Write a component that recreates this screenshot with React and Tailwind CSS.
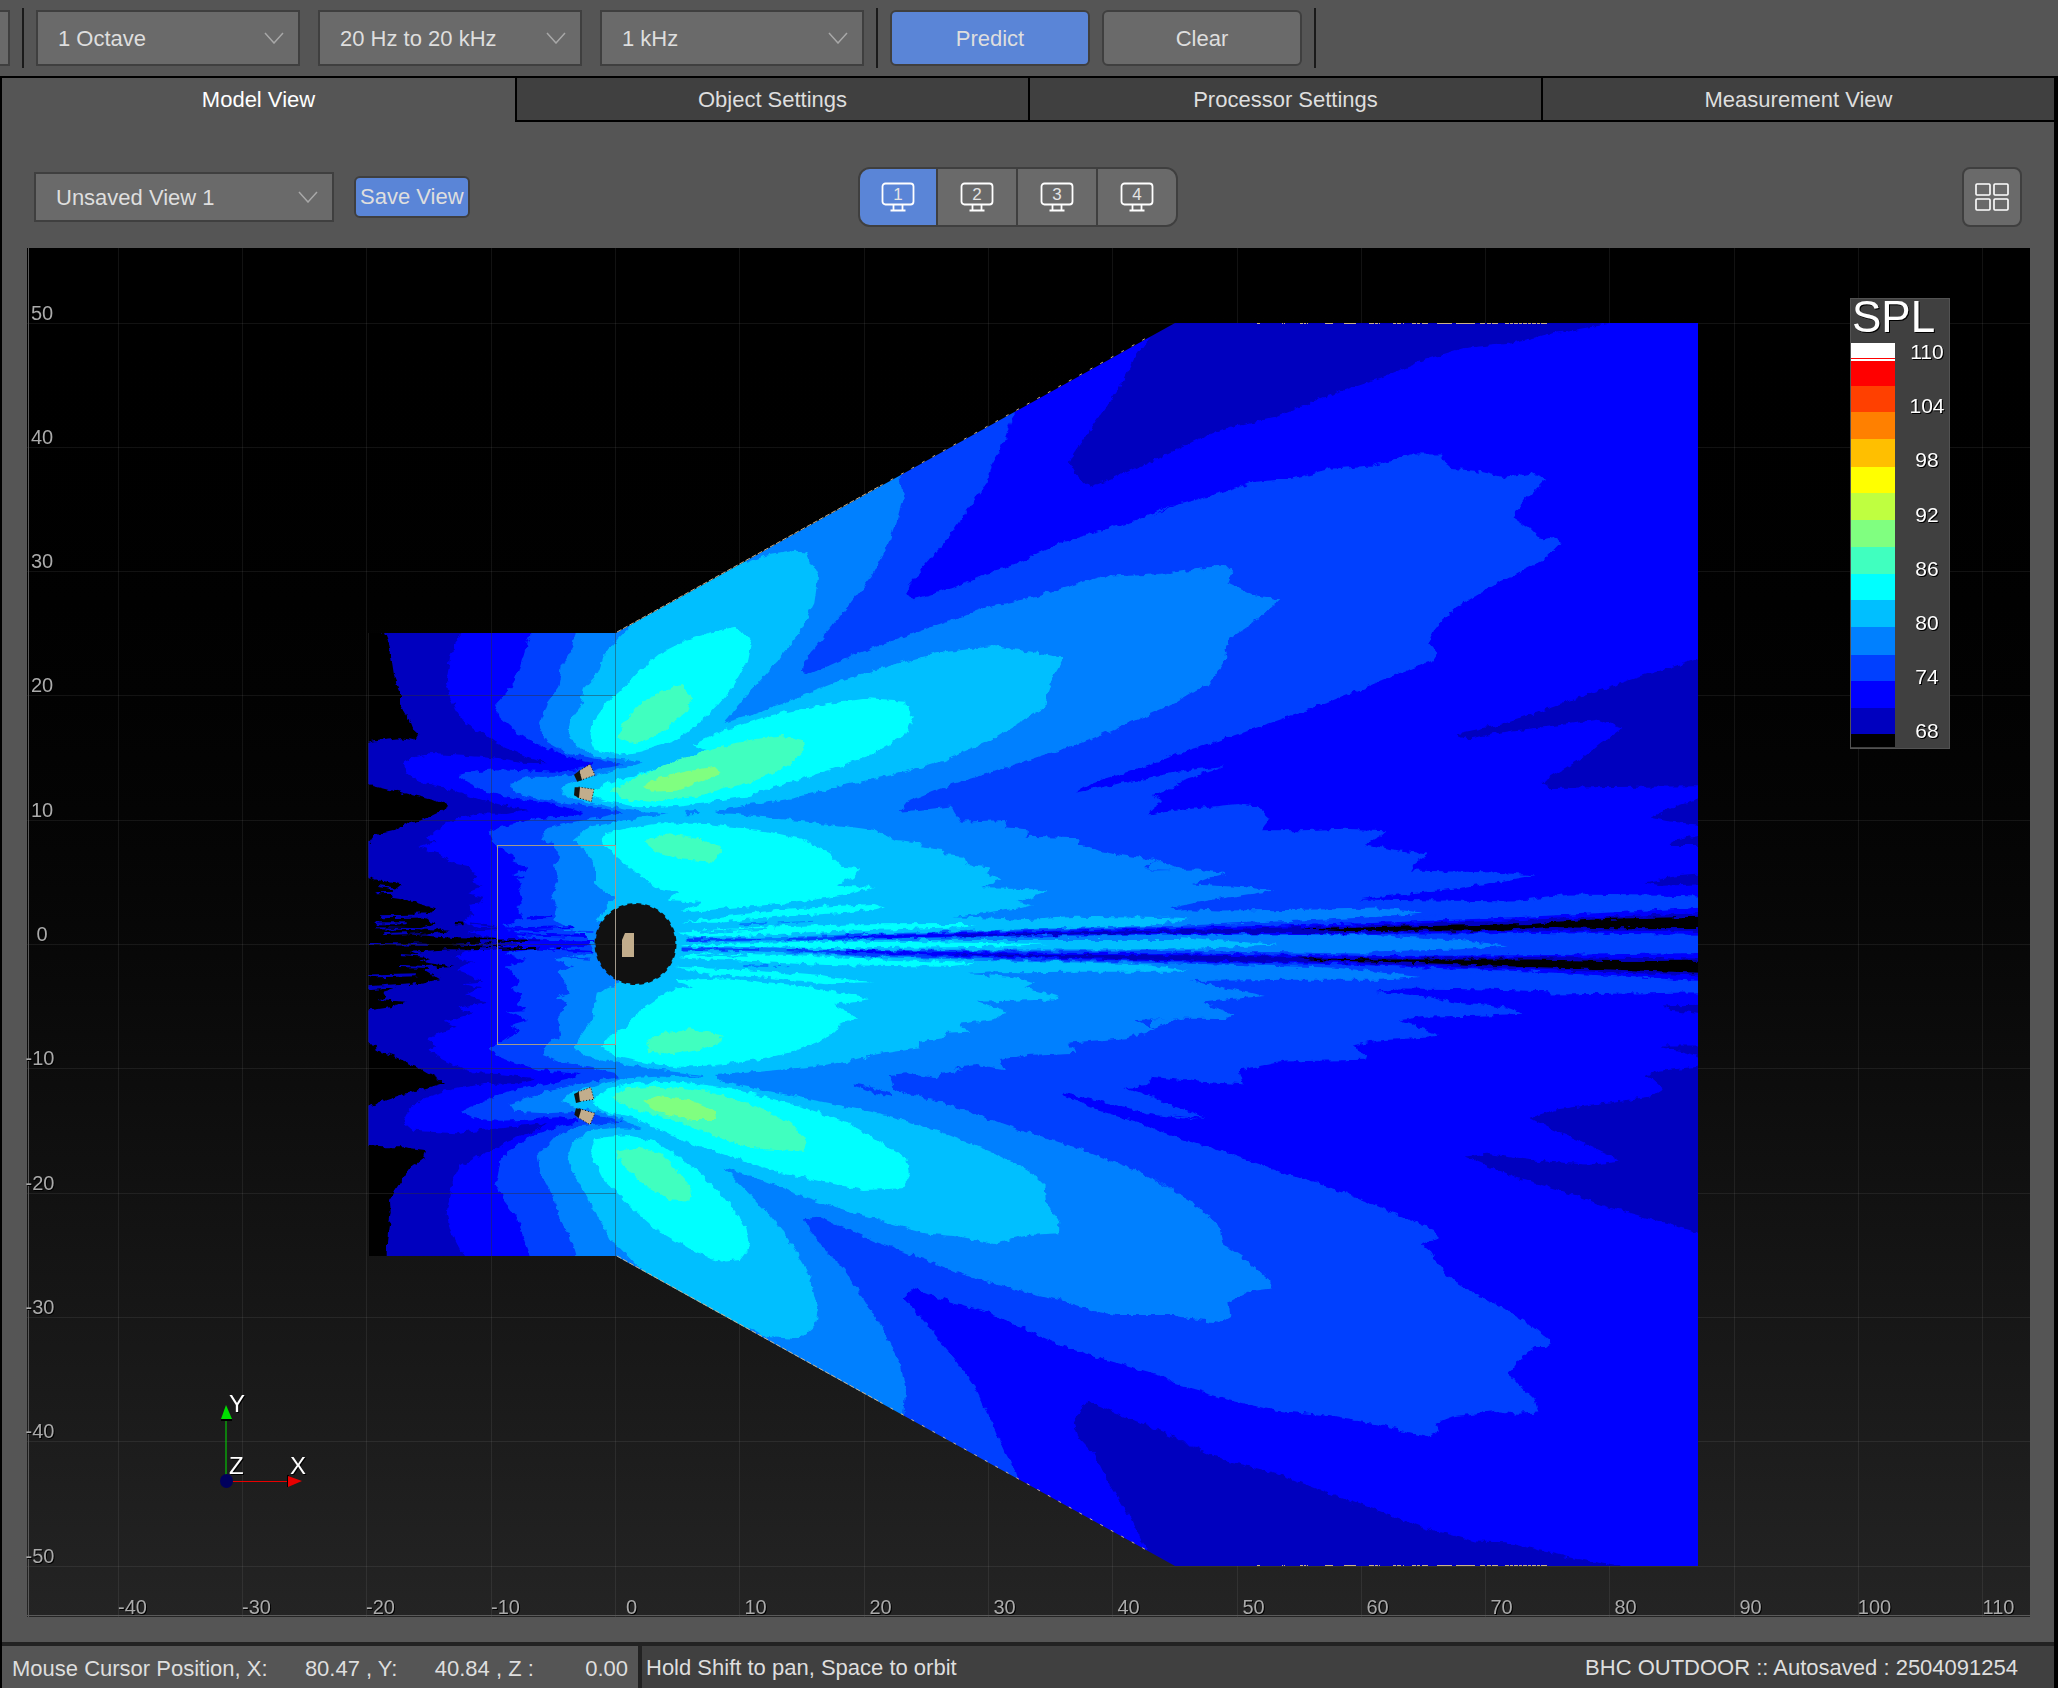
import React from "react";

/* ------------------------------------------------------------------ */
/* Field data: contours are stored per survey patch and mapped to the  */
/* model canvas. A letter switches patch, "x,y" pairs are patch units. */
/* ------------------------------------------------------------------ */
const PATCHES = {
  A: [340, 600, 3, 3],
  B: [340, 920, 3, 3],
  C: [600, 320, 2.6133, 3],
  D: [1150, 320, 2.6133, 2.4889],
  E: [660, 740, 3, 3],
  F: [600, 1070, 2.6133, 3],
  G: [1150, 930, 2.6133, 2.45],
  O: [0, 0, 1, 1],
};

function contour(text) {
  let patch = PATCHES.O;
  const out = [];
  for (const token of text.trim().split(/\s+/)) {
    if (PATCHES[token]) {
      patch = PATCHES[token];
      continue;
    }
    const [x, y] = token.split(",").map(Number);
    const px = patch[0] + x / patch[2];
    const py = patch[1] + y / patch[3];
    out.push(px.toFixed(1) + "," + py.toFixed(1));
  }
  return out.join(" ");
}

const AREA = "368,633 616,633 1175,323 1698,323 1698,1566 1175,1566 616,1256 368,1256";

const LAYERS = [
  {
    fill: "#0000bf",
    shapes: ["O 340,300 1720,300 1720,1600 340,1600"],
  },
  {
    fill: "#000000",
    shapes: [
      "A 60,80 135,98 147,130 155,180 163,230 180,270 180,310 200,345 215,385 235,403 225,420 180,415 130,420 60,432",
      "A 60,545 150,568 230,588 280,600 328,618 290,640 255,657 200,672 160,692 105,705 90,728 60,732",
      "A 60,822 120,842 185,853 160,872 150,893 200,900 285,925 270,938 220,942 290,970 240,985 330,992 230,1008 180,1020 B 300,25 325,35 200,42 350,55 560,58 600,62 420,68 330,72 600,85 480,92 330,88 210,95 270,118 240,125 340,140 250,148 300,178 250,190 190,198 130,215 140,232 110,240 200,245 150,262 60,276",
      "B 60,370 115,375 100,392 160,408 230,440 312,488 270,502 200,520 140,540 60,568",
      "B 60,675 130,682 190,682 255,690 250,715 210,745 180,790 150,840 152,880 145,930 140,980 140,1030 60,1030",
      "A 345,966 372,968 368,976 348,976",
    ],
  },
  {
    fill: "#0000ff",
    shapes: [
      "A 380,80 345,130 330,170 325,210 318,250 330,290 350,330 375,370 430,400 470,430 530,455 570,475 625,490 540,488 480,478 420,470 330,465 270,462 210,475 188,490 200,520 240,545 300,560 370,580 430,600 500,618 565,630 500,642 420,640 350,655 300,680 260,715 290,725 235,742 290,760 340,790 385,798 410,830 400,850 430,862 385,880 430,890 420,910 385,915 400,940 370,965 430,985 380,1000 B 430,15 380,35 440,50 480,58 540,72 480,82 380,96 340,110 400,125 350,150 390,165 430,185 365,190 420,205 375,225 440,245 350,265 400,280 310,305 350,320 300,338 258,360 290,375 265,390 300,415 350,440 400,460 480,462 585,475 530,490 430,492 330,510 260,530 210,565 190,605 220,632 350,640 400,632 480,625 560,618 625,612 560,640 500,662 460,690 400,715 360,740 340,780 328,830 320,880 330,930 350,970 382,1030 O 560,1600 1720,1600 1720,300 560,300",
    ],
  },
  {
    fill: "#0000bf",
    shapes: [
      "C 1460,20 1430,60 1400,110 1360,200 1300,300 1240,400 1228,430 1245,465 1280,500 1340,475 1450,420 1568,355 D 65,320 200,268 330,240 460,190 600,145 720,98 820,70 950,58 1040,35 1200,10 1200,-20 0,-20",
      "F 1430,1450 1410,1400 1380,1330 1320,1220 1290,1150 1250,1100 1238,1065 1270,995 1350,1030 1480,1090 1568,1135 G 65,1245 200,1300 330,1330 480,1385 600,1425 720,1465 850,1498 930,1500 1100,1538 1230,1560 1230,1600 0,1600",
      "D 1460,835 1260,895 1120,940 1000,980 900,1010 800,1030 830,1042 950,1022 1060,1010 1170,995 1235,1015 1190,1045 1130,1090 1060,1130 1025,1150 1050,1165 1200,1162 1460,1160",
      "D 1460,1186 1370,1212 1308,1238 1350,1247 1460,1260",
      "D 1460,1276 1380,1292 1355,1307 1460,1307",
      "D 1460,1378 1370,1385 1295,1400 1340,1408 1460,1404",
      "G 1340,185 1460,183 1460,208 1360,198",
      "G 1330,283 1460,283 1460,316",
      "G 1460,332 1330,345 1300,358 1340,390 1310,408 1180,425 1060,440 992,460 1050,488 1130,520 1200,550 1230,568 1150,575 1000,565 880,548 825,555 950,605 1080,640 1200,680 1300,705 1460,750",
    ],
  },
  {
    fill: "#0040ff",
    shapes: [
      "A 580,80 555,150 540,200 515,260 465,315 480,350 530,395 580,430 650,455 700,475 760,490 750,500 700,512 640,515 540,510 460,508 400,515 353,525 380,545 440,575 520,595 600,605 680,622 728,640 700,650 620,652 540,665 480,680 448,695 460,730 480,745 530,775 515,790 560,805 520,825 545,850 535,870 550,895 530,925 550,955 490,975 520,1000 B 500,20 540,50 650,60 760,66 740,78 600,85 490,100 560,120 500,140 520,165 545,185 515,205 550,225 530,250 560,270 500,275 565,300 510,315 540,335 490,360 447,385 480,412 530,430 600,450 720,462 680,480 600,495 500,515 430,545 360,572 400,595 470,602 550,600 650,592 700,597 720,605 640,625 570,650 510,690 480,730 468,790 490,840 530,890 550,950 580,1030 O 620,1320 900,1500 F 1095,1240 1085,1200 1060,1150 1030,1070 1010,1020 980,950 930,870 880,800 830,730 792,680 820,655 900,690 1000,720 1090,765 1200,825 1340,875 1480,920 1503,942 G 65,1112 200,1150 330,1178 450,1188 600,1212 725,1242 755,1230 745,1208 790,1192 900,1178 960,1185 1015,1182 1005,1150 960,1110 940,1085 960,1058 1005,1022 1035,1022 1050,1010 990,965 900,915 800,865 750,815 735,790 710,770 755,755 745,735 650,698 500,640 350,595 200,545 65,508 0,485 F 1503,203 1400,155 1300,120 1208,75 1212,68 1350,105 1450,135 1568,150 G 60,452 145,460 60,432 0,408 F 1470,90 1370,52 1430,45 1440,20 1568,35 G 100,370 245,378 235,343 350,322 560,318 565,305 525,283 600,270 750,262 755,255 650,222 720,212 860,210 975,205 930,190 800,178 700,160 590,152 650,143 850,145 1040,150 1050,158 1300,155 1460,152 D 1460,1435 1300,1432 1100,1430 1040,1437 950,1447 750,1445 545,1442 650,1430 800,1415 900,1400 1005,1382 900,1375 680,1370 690,1355 728,1328 650,1320 560,1305 600,1285 618,1270 500,1266 400,1270 290,1270 315,1240 280,1212 230,1205 100,1217 0,1230 E 1465,220 1480,205 1510,185 1475,165 1560,135 D 70,1150 170,1118 195,1110 100,1120 0,1138 E 1400,125 1300,148 1245,158 1290,130 1400,95 1480,70 1560,38 D 200,1040 400,975 550,920 650,880 740,848 752,830 730,805 750,760 800,715 900,660 1030,597 1075,555 1065,540 1025,548 990,515 950,490 980,450 1038,395 1000,382 930,392 850,375 780,370 760,335 680,335 580,362 470,370 370,395 270,403 150,440 65,462 0,492 C 1503,550 1400,600 1300,635 1200,670 1100,725 1000,765 920,805 820,838 803,825 805,795 850,735 920,640 960,570 1010,490 1020,440 1050,380 1075,300 1092,260 O 900,400 560,560",
    ],
  },
  {
    fill: "#0080ff",
    shapes: [
      "A 710,80 700,140 665,200 655,260 620,310 595,380 620,425 680,458 760,475 820,488 850,495 780,506 740,520 640,530 570,530 510,548 530,580 600,598 700,612 780,622 850,638 760,655 680,670 620,685 603,715 640,735 660,770 645,795 655,840 635,880 650,920 640,960 680,985 B 640,20 740,50 760,100 640,115 700,140 655,150 685,220 650,235 680,250 655,300 660,350 620,370 608,405 660,425 740,440 830,460 840,472 720,490 620,515 510,552 525,575 620,580 720,575 800,590 850,605 720,615 640,655 590,710 600,760 640,830 660,900 690,950 712,1030 O 640,1320 800,1420 F 795,1040 800,960 785,880 740,780 690,690 640,600 580,530 530,445 570,440 640,475 720,515 830,560 940,610 1070,655 1200,690 1300,725 1350,735 1500,735 G 65,948 180,962 210,945 205,912 260,885 315,878 318,862 240,800 190,770 180,725 130,680 65,640 0,603 F 1500,365 1400,300 1250,235 1100,180 900,100 770,60 755,15 800,10 880,25 890,12 950,0 E 880,985 950,975 1035,988 1020,960 1100,945 1250,938 1220,908 1400,895 1485,870 1425,840 1560,835 G 12,242 0,236 0,217 200,218 220,210 135,178 200,170 300,162 220,145 105,125 350,122 600,122 705,115 550,98 400,85 600,52 800,48 935,38 D 800,1542 600,1532 400,1512 560,1488 713,1475 600,1465 400,1468 180,1470 50,1465 150,1445 325,1420 250,1412 110,1405 150,1390 200,1377 120,1368 0,1370 0,1352 18,1345 0,1335 E 1560,390 1455,388 1485,360 1350,340 1255,315 1260,295 1100,290 1100,268 1035,262 1040,240 900,245 870,200 800,208 718,215 740,185 850,140 1000,95 1150,45 1290,0 C 1400,1200 1503,1150 1568,1105 D 65,945 150,910 180,870 200,840 195,820 210,790 290,740 340,695 270,685 205,655 215,630 195,610 65,628 0,635 C 1503,755 1430,765 1310,770 1240,795 1100,840 1000,865 880,915 750,970 650,1010 550,1062 528,1055 530,1030 590,940 640,870 710,770 750,680 775,600 792,530 780,455 O 850,460 580,600",
    ],
  },
  {
    fill: "#00bfff",
    shapes: [
      "A 870,80 830,120 790,170 775,220 735,260 725,310 690,360 685,400 710,440 770,470 850,478 905,487 870,500 800,515 700,545 660,565 680,590 740,605 800,618 860,630 985,640 860,660 750,680 700,720 740,755 765,800 765,850 800,880 830,890 800,920 770,960 900,1010 B 830,195 770,220 755,300 720,350 705,385 740,410 820,425 900,440 1000,455 1090,465 1000,468 860,475 750,500 700,515 660,545 700,560 770,575 830,590 905,627 820,625 750,630 700,665 680,710 700,760 730,810 780,900 810,960 F 40,520 90,580 O 720,1350 F 390,775 430,800 520,808 560,770 570,720 545,610 500,520 440,430 380,360 322,290 400,320 520,375 640,420 760,460 850,490 940,500 1030,522 1120,495 1200,490 1200,455 1168,400 1165,350 1130,310 1050,260 900,190 750,135 600,100 450,65 320,35 E 165,1005 300,995 450,980 560,965 640,945 700,935 780,925 775,905 850,895 860,878 925,875 895,852 1000,838 1040,815 950,785 1200,778 1200,770 1090,742 1125,730 1050,710 920,702 1000,697 1250,695 1560,695 G 100,98 0,85 0,50 330,38 D 330,1555 0,1530 0,1505 110,1490 0,1482 E 1560,535 1250,530 1100,540 880,532 1000,515 1080,505 1120,495 1075,485 1165,455 1120,445 965,442 1025,418 980,400 990,382 920,375 910,350 845,345 850,330 780,322 785,308 710,300 640,270 530,255 440,245 300,230 165,215 250,198 400,175 550,135 700,105 850,60 990,0 C 1160,1165 1165,1130 1190,1060 1212,1015 1150,1000 1030,978 880,1000 780,1030 620,1085 500,1140 400,1185 320,1210 380,1130 460,1030 520,940 560,850 570,770 540,700 510,692 430,708 385,728 O 700,540",
    ],
  },
  {
    fill: "#0080ff",
    shapes: [
      "A 1035,636 1080,634 1075,642 1040,643",
      "A 1125,632 1180,625 1260,615 1260,645 1180,640 1140,642",
      "E 80,216 118,213 115,222 85,222",
      "E 0,1000 25,1003 20,1010 0,1008",
      "E 40,1000 80,1006 60,1010",
      "E 90,1008 130,1005 128,1012 95,1014",
    ],
  },
  {
    fill: "#0040ff",
    shapes: [
      "E 580,1030 640,1042 690,1060 690,1070 640,1058 590,1042",
      "E 1530,505 1570,498 1570,508 1536,511",
    ],
  },
  {
    fill: "#00ffff",
    shapes: [
      "A 1185,80 1120,95 1040,120 960,160 900,210 860,255 800,310 755,370 748,405 765,450 830,465 900,455 1000,425 1100,350 1180,260 1225,180 1235,130 1215,100",
      "A 755,575 800,550 870,530 1000,490 1100,450 C 240,1275 330,1230 450,1185 580,1155 700,1135 800,1142 805,1170 820,1190 800,1240 700,1310 600,1350 500,1385 380,1430 200,1458 100,1462 0,1440 A 800,600 760,590",
      "A 785,725 800,700 860,685 960,670 1100,672 1260,690 E 420,295 510,340 550,380 597,385 580,410 530,438 650,440 560,465 400,488 200,505 100,515 65,515 120,490 A 1080,905 980,900 1020,875 950,865 900,825 830,770",
      "E 65,548 180,530 400,505 640,492 675,503 560,518 350,530 180,548",
      "E 55,575 300,560 600,553 945,552 900,562 500,574 250,588 100,590",
      "E 60,616 400,606 700,605 1165,612 1000,620 600,625 100,620",
      "E 60,652 100,640 400,645 650,658 955,670 850,680 500,675 200,662",
      "E 45,680 250,690 450,705 640,727 500,730 300,712 150,706",
      "E 55,720 200,715 400,735 500,750 630,778 520,792 590,832 540,855 500,895 400,935 300,960 170,975 B 1150,435 1020,440 920,430 830,410 785,385 800,350 860,320 900,270 960,230 1010,205 1060,200 1010,185",
      "B 755,545 800,510 860,490 980,485 1100,495 1260,520 F 400,75 540,115 650,160 740,220 800,265 810,310 790,355 690,360 600,340 450,300 330,255 200,205 100,150 0,120 B 780,570",
      "B 750,700 765,655 860,645 950,665 1060,740 1150,830 1215,920 1230,980 1200,1020 1150,1025 1070,1000 950,930 860,850 790,780",
    ],
  },
  {
    fill: "#40ffbf",
    shapes: [
      "A 1025,255 1060,290 1040,330 970,395 880,432 835,410 850,370 900,310 970,270",
      "C 30,1410 100,1370 200,1320 350,1270 480,1248 530,1260 535,1290 490,1340 380,1390 250,1430 130,1445 60,1438",
      "A 910,720 990,700 1080,715 1150,750 1120,785 1020,778 950,755",
      "B 915,375 960,340 1050,325 1145,345 1140,370 1080,390 1000,402 930,395",
      "F 30,80 70,55 150,50 280,65 400,105 500,160 540,215 530,245 400,235 300,200 180,145 80,115",
      "B 830,695 900,680 960,700 1020,760 1055,810 1045,845 990,840 920,800 850,740",
    ],
  },
  {
    fill: "#80ff80",
    shapes: [
      "C 110,1400 150,1375 220,1355 300,1340 312,1355 280,1380 200,1412 130,1415",
      "F 110,95 150,78 230,90 300,125 305,150 240,150 150,125",
    ],
  },
];

/* The two cancellation rays that leave the centre array to the right. */
const RAYS = [
  {
    fill: "#0080ff",
    shapes: [
      "E 300,593 600,582 1560,554 1560,600 600,600 300,602",
      "E 300,624 600,629 1560,628 1560,676 600,650 300,634",
    ],
  },
  {
    fill: "#0040ff",
    shapes: [
      "E 380,595 600,584 1100,570 1560,557 D 600,1486 1460,1460 1460,1534 600,1530 0,1530 E 600,597 380,602",
      "E 380,627 600,631 1100,632 1560,632 G 600,58 1460,52 1460,125 600,95 0,80 E 1100,660 600,647 380,633",
    ],
  },
  {
    fill: "#0000ff",
    shapes: [
      "E 500,592 700,584 1000,577 1560,564 D 600,1500 1000,1485 1460,1462 1460,1530 1000,1526 500,1528 0,1528 E 1000,587 700,594",
      "E 500,632 700,634 1100,638 1560,640 G 600,64 1000,62 1460,56 1460,126 1000,102 500,84 0,76 E 1000,652 700,643",
    ],
  },
  {
    fill: "#0000bf",
    shapes: [
      "E 820,588 1100,580 1560,571 D 600,1506 1000,1492 1460,1476 1460,1520 1000,1520 500,1526 0,1526 E 1100,586",
      "E 820,641 1100,644 1560,646 G 600,68 1000,66 1460,70 1460,112 1000,97 500,80 0,73 E 1100,650",
    ],
  },
  {
    fill: "#000000",
    shapes: [
      "D 390,1517 600,1511 800,1507 1000,1503 1050,1498 1200,1490 1460,1485 1460,1513 1200,1514 1050,1511 900,1519 700,1520 500,1521",
      "G 390,69 600,72 800,72 1000,72 1200,76 1460,75 1460,105 1200,97 1000,91 800,84 600,78 440,74",
    ],
  },
];

/* Fine interference lines: colour, thickness, start and end. */
const STREAKS = [
  ["#0000bf", 2, "A 115,858", "A 170,866"],
  ["#0000bf", 2, "A 110,880", "A 175,878"],
  ["#0000bf", 3, "A 120,950", "A 260,948"],
  ["#0000bf", 2, "A 105,985", "A 250,988"],
  ["#0000bf", 2, "B 110,10", "B 200,10"],
  ["#0000bf", 2, "B 130,42", "B 200,40"],
  ["#0000bf", 2, "B 90,72", "B 260,74"],
  ["#0000bf", 2, "B 180,102", "B 270,108"],
  ["#0000bf", 2, "B 180,138", "B 290,142"],
  ["#0000bf", 3, "B 84,168", "B 230,164"],
  ["#0000bf", 4, "B 84,205", "B 210,196"],
  ["#0000ff", 2, "A 560,955", "A 640,950"],
  ["#0000ff", 2, "A 500,985", "A 620,992"],
  ["#0000ff", 2, "B 520,25", "B 700,22"],
  ["#0000ff", 2, "B 500,42", "B 740,48"],
  ["#0040ff", 2, "B 640,34", "B 760,36"],
  ["#0000bf", 3, "B 420,62", "B 600,62"],
  ["#0000bf", 3, "B 420,86", "B 600,84"],
  ["#000000", 2, "B 470,62", "B 560,62"],
  ["#000000", 2, "B 480,86", "B 590,84"],
  ["#000000", 2, "B 646,86", "B 670,84"],
  ["#0000ff", 2, "B 610,66", "B 760,66"],
  ["#0000ff", 2, "B 600,86", "B 760,96"],
  ["#0040ff", 2, "B 660,110", "B 750,116"],
  ["#0000ff", 2, "A 515,790", "A 560,804"],
  ["#0000ff", 2, "A 520,835", "A 550,832"],
  ["#0000bf", 2, "B 390,10", "B 460,18"],
  ["#0000bf", 2, "A 380,990", "A 470,985"],
  ["#00bfff", 2, "E 120,578", "E 320,566"],
  ["#00bfff", 2, "E 110,646", "E 260,650"],
  ["#0080ff", 2, "E 240,553", "E 320,551"],
  ["#0080ff", 1, "E 350,549", "E 460,544"],
  ["#0080ff", 2, "E 250,675", "E 325,678"],
  ["#0080ff", 1, "E 340,679", "E 385,680"],
  ["#0080ff", 4, "E 80,600", "E 380,598"],
  ["#0080ff", 4, "E 65,627", "E 380,629"],
  ["#0040ff", 2, "E 80,600", "E 380,598"],
  ["#0040ff", 2, "E 65,627", "E 300,629"],
];

/* Nominal position of the world origin and the 10 m grid pitch. */
const ORIGIN_X = 615;
const ORIGIN_Y = 944;
const PITCH = 124.3;

const X_TICKS = [-40, -30, -20, -10, 0, 10, 20, 30, 40, 50, 60, 70, 80, 90, 100, 110];
const Y_TICKS = [50, 40, 30, 20, 10, 0, -10, -20, -30, -40, -50];
const gx = (v) => Math.round(ORIGIN_X + (v / 10) * PITCH) + 0.5;
const gy = (v) => Math.round(ORIGIN_Y - (v / 10) * PITCH) + 0.5;

const LEGEND = [
  ["#ffffff", 343, 361],
  ["#ff0000", 361, 386],
  ["#ff4000", 386, 412],
  ["#ff8000", 412, 439],
  ["#ffbf00", 439, 467],
  ["#ffff00", 467, 493],
  ["#bfff40", 493, 520],
  ["#80ff80", 520, 547],
  ["#40ffbf", 547, 574],
  ["#00ffff", 574, 600],
  ["#00bfff", 600, 627],
  ["#0080ff", 627, 655],
  ["#0040ff", 655, 681],
  ["#0000ff", 681, 708],
  ["#0000bf", 708, 734],
  ["#000000", 734, 747],
];
const LEGEND_LABELS = [110, 104, 98, 92, 86, 80, 74, 68];

const SPEAKERS = [
  ["A 718,512 750,493 765,525 722,541", "A 702,524 718,512 726,540 712,545"],
  ["A 716,561 762,568 754,605 714,593", "A 704,562 720,562 717,594 702,586"],
  ["B 714,516 752,502 762,538 716,545", "B 702,522 716,515 720,546 708,549"],
  ["B 718,566 765,580 750,614 710,590", "B 708,565 724,568 716,594 703,584"],
];

const TOP_DASHES = [
  [1257, 3], [1282, 1], [1284, 1], [1300, 3], [1304, 2], [1307, 1], [1325, 8], [1344, 12],
  [1369, 5], [1375, 3], [1379, 1], [1393, 3], [1397, 4], [1403, 1], [1412, 4], [1417, 3],
  [1422, 6], [1437, 15], [1456, 19], [1480, 5], [1487, 4], [1492, 6], [1505, 4], [1510, 3],
  [1514, 4], [1519, 3], [1523, 4], [1528, 3], [1532, 4], [1537, 3], [1541, 6],
];

function ShadowText({ x, y, size, fill, anchor, children }) {
  return (
    <text
      x={x}
      y={y}
      fontSize={size}
      textAnchor={anchor}
      fill={fill}
      className="[filter:drop-shadow(1px_1px_0_#000)]"
    >
      {children}
    </text>
  );
}

function Layer({ layer }) {
  return (
    <g fill={layer.fill}>
      {layer.shapes.map((s, i) => (
        <polygon key={i} points={contour(s)} />
      ))}
    </g>
  );
}

function ModelCanvas() {
  return (
    <svg
      role="img"
      aria-label="SPL prediction plot"
      viewBox="27 248 2003 1369"
      className="block h-full w-full overflow-visible [font-family:'Liberation_Sans',Arial,sans-serif]"
    >
      <defs>
        <clipPath id="area">
          <polygon points={AREA} />
        </clipPath>
        <filter id="rough" filterUnits="userSpaceOnUse" x="340" y="300" width="1380" height="1290">
          <feTurbulence type="fractalNoise" baseFrequency="0.14" numOctaves="2" seed="4" result="n" />
          <feDisplacementMap in="SourceGraphic" in2="n" scale="7" xChannelSelector="R" yChannelSelector="G" />
        </filter>
        <filter id="fray" filterUnits="userSpaceOnUse" x="340" y="800" width="1380" height="290">
          <feTurbulence type="fractalNoise" baseFrequency="0.1 0.25" numOctaves="2" seed="9" result="n" />
          <feDisplacementMap in="SourceGraphic" in2="n" scale="6" xChannelSelector="R" yChannelSelector="G" />
        </filter>
      </defs>

      <g stroke="#ffffff" strokeOpacity="0.07">
        {X_TICKS.map((v) => (
          <line key={v} x1={gx(v)} x2={gx(v)} y1="248" y2="1617" />
        ))}
        {Y_TICKS.map((v) => (
          <line key={v} x1="27" x2="2030" y1={gy(v)} y2={gy(v)} />
        ))}
      </g>

      <g clipPath="url(#area)">
        <g filter="url(#rough)">
          {LAYERS.map((l, i) => (
            <Layer key={i} layer={l} />
          ))}
        </g>
        <g filter="url(#fray)">
          {STREAKS.map(([color, w, a, b], i) => (
            <polyline key={i} points={contour(a + " " + b)} stroke={color} strokeWidth={w} fill="none" />
          ))}
          {RAYS.map((l, i) => (
            <Layer key={i} layer={l} />
          ))}
        </g>
      </g>

      <g stroke="#303030" strokeOpacity="0.45">
        <line x1="368.5" x2="368.5" y1="633" y2="1256" />
        <line x1="491.5" x2="491.5" y1="633" y2="1256" />
        <line x1="615.5" x2="615.5" y1="633" y2="1256" />
        {[20, 10, 0, -10, -20].map((v) => (
          <line key={v} x1="368" x2="616" y1={gy(v)} y2={gy(v)} />
        ))}
      </g>

      <g stroke="#c8b08c" fill="none">
        <polyline points="617,632 880,486" strokeDasharray="5 2" />
        <polyline points="880,486 1150,336" strokeDasharray="3 9" />
        <polyline points="617,1256 880,1402" strokeDasharray="5 2" />
        <polyline points="880,1402 1150,1552" strokeDasharray="3 9" />
      </g>
      <g fill="#c8b08c">
        {TOP_DASHES.map(([x, w]) => (
          <React.Fragment key={x}>
            <rect x={x} y="323" width={w} height="1" />
            <rect x={x} y="1565" width={w} height="1" />
          </React.Fragment>
        ))}
      </g>

      <circle cx="635.5" cy="944" r="40" fill="#111111" stroke="#111111" strokeDasharray="5 4" strokeWidth="2" />
      <line x1="596" x2="675" y1="944.5" y2="944.5" stroke="#1f1f1f" />
      <polygon points="622,940 625,933 634,933 634,957 622,957" fill="#c2ad8c" />
      <rect x="497.5" y="845.5" width="118" height="199" fill="none" stroke="#a39a8c" />

      {SPEAKERS.map(([body, cap], i) => (
        <g key={i}>
          <polygon points={contour(body)} fill="#c2ad8c" stroke="#14140f" strokeDasharray="1 2" />
          <polygon points={contour(cap)} fill="#14140f" />
        </g>
      ))}

      <g stroke="#5a5a5a">
        <line x1="28.5" x2="28.5" y1="248" y2="1617" />
        <line x1="27" x2="2030" y1="1615.5" y2="1615.5" />
      </g>

      {Y_TICKS.map((v) => (
        <ShadowText key={v} x={v < 0 ? 40 : 42} y={gy(v) - 4} size={20} fill="#aaaaaa" anchor="middle">
          {v}
        </ShadowText>
      ))}
      {X_TICKS.map((v) => (
        <ShadowText key={v} x={gx(v) + (v < 0 ? 14 : 16)} y={1614} size={20} fill="#aaaaaa" anchor="middle">
          {v}
        </ShadowText>
      ))}

      <rect x="225.5" y="1419" width="1" height="56" fill="#00e000" />
      <polygon points="226,1405 221,1419 232,1419" fill="#00e000" />
      <rect x="221" y="1419" width="11" height="2" fill="#000000" />
      <rect x="232" y="1481" width="56" height="1" fill="#e80000" />
      <rect x="287" y="1475" width="2" height="12" fill="#000000" />
      <polygon points="288,1476 302,1481 288,1487" fill="#e80000" />
      <ellipse cx="226.5" cy="1481" rx="6.5" ry="7" fill="#00005c" />
      <ShadowText x={229} y={1412} size={24} fill="#ffffff" anchor="start">Y</ShadowText>
      <ShadowText x={229} y={1474} size={24} fill="#ffffff" anchor="start">Z</ShadowText>
      <ShadowText x={290} y={1474} size={24} fill="#ffffff" anchor="start">X</ShadowText>

      <rect x="1850.5" y="298.5" width="99" height="450" fill="#404040" stroke="#525252" />
      <ShadowText x={1852} y={332} size={44} fill="#ffffff" anchor="start">SPL</ShadowText>
      {LEGEND.map(([c, a, b]) => (
        <rect key={a} x="1851" y={a} width="44" height={b - a} fill={c} />
      ))}
      <rect x="1851" y="358" width="44" height="1" fill="#ff0000" />
      {LEGEND_LABELS.map((v, i) => (
        <ShadowText key={v} x={1927} y={359 + Math.round(i * 54.2)} size={21} fill="#ffffff" anchor="middle">
          {v}
        </ShadowText>
      ))}
    </svg>
  );
}

function Picker({ label, value, className, box = "h-14" }) {
  return (
    <div className={"relative " + className}>
      <select
        aria-label={label}
        defaultValue={value}
        className={
          box +
          " w-full cursor-pointer appearance-none border-2 border-[#3f3f3f] bg-[#6a6a6a] pl-5 pr-12 pt-0.5 text-[#dedede] outline-none"
        }
      >
        <option>{value}</option>
      </select>
      <svg
        viewBox="0 0 20 12"
        className="pointer-events-none absolute right-4 top-1/2 h-3 w-5 -translate-y-1/2"
        fill="none"
        stroke="#a8a8a8"
        strokeWidth="1.5"
      >
        <path d="M1 1 L10 11 L19 1" />
      </svg>
    </div>
  );
}

function Divider() {
  return <div className="h-15 w-0.5 bg-[#1a1a1a]" />;
}

function Screen({ n }) {
  return (
    <svg viewBox="0 0 34 30" className="h-[30px] w-[34px]" fill="none" stroke="#ffffff" strokeWidth="1.8">
      <rect x="1.5" y="1.5" width="31" height="21" rx="3" />
      <path d="M12.5 22.5 V28 M21.5 22.5 V28 M9.5 28.5 H24.5" />
      <text x="17" y="18" fontSize="17" textAnchor="middle" fill="#e4e4e4" stroke="none">
        {n}
      </text>
    </svg>
  );
}

export default function App() {
  const tabs = ["Model View", "Object Settings", "Processor Settings", "Measurement View"];
  return (
    <div className="flex h-screen min-h-[700px] w-full flex-col bg-[#555555] text-[22px] leading-7 text-[#dedede] [font-family:'Liberation_Sans',Arial,sans-serif]">
      <header className="flex h-19 shrink-0 items-center">
        <div className="h-14 w-2.5 border-2 border-l-0 border-[#3f3f3f] bg-[#6a6a6a]" />
        <div className="ml-3">
          <Divider />
        </div>
        <Picker label="Bandwidth" value="1 Octave" className="ml-3 w-66" />
        <Picker label="Frequency range" value="20 Hz to 20 kHz" className="ml-4.5 w-66" />
        <Picker label="Centre frequency" value="1 kHz" className="ml-4.5 w-66" />
        <div className="ml-3">
          <Divider />
        </div>
        <button className="ml-3 h-14 w-50 rounded-md border-2 border-[#3f3f3f] bg-[#5a85d7] pt-0.5">Predict</button>
        <button className="ml-3 h-14 w-50 rounded-md border-2 border-[#3f3f3f] bg-[#6a6a6a] pt-0.5">Clear</button>
        <div className="ml-3">
          <Divider />
        </div>
      </header>

      <main className="flex min-h-0 flex-1 flex-col border-l-2 border-r-4 border-t-2 border-black">
        <div role="tablist" className="grid h-11 shrink-0 grid-cols-4">
          {tabs.map((t, i) => (
            <button
              key={t}
              role="tab"
              aria-selected={i === 0}
              className={
                i === 0
                  ? "border-b-2 border-[#555555] bg-[#555555] pt-0.5 text-white"
                  : "border-b-2 border-l-2 border-black bg-[#404040] pt-0.5"
              }
            >
              {t}
            </button>
          ))}
        </div>

        <div className="grid h-[126px] shrink-0 grid-cols-[1fr_auto_1fr] items-center pl-8 pr-8 pt-6">
          <div className="flex items-center">
            <Picker label="View" value="Unsaved View 1" className="w-75" box="h-[50px]" />
            <button className="ml-5 h-[42px] rounded-md border-2 border-[#3f3f3f] bg-[#5a85d7] px-1">
              Save View
            </button>
          </div>
          <div className="mr-5 flex h-15 overflow-hidden rounded-xl border-2 border-[#3f3f3f]">
            {[1, 2, 3, 4].map((n) => (
              <button
                key={n}
                aria-label={"Viewport " + n}
                aria-pressed={n === 1}
                className={
                  n === 1
                    ? "flex w-19 items-center justify-center bg-[#5a85d7]"
                    : "flex w-20 items-center justify-center border-l-2 border-[#3f3f3f] bg-[#6a6a6a]"
                }
              >
                <Screen n={n} />
              </button>
            ))}
          </div>
          <div className="flex justify-end">
            <button
              aria-label="Viewport layout"
              className="flex size-15 items-center justify-center rounded-lg border-2 border-[#3f3f3f] bg-[#6a6a6a]"
            >
              <svg viewBox="0 0 34 28" className="h-7 w-[34px]" fill="none" stroke="#ffffff" strokeWidth="1.6">
                <rect x="1" y="1" width="14" height="11" rx="1" />
                <rect x="19" y="1" width="14" height="11" rx="1" />
                <rect x="1" y="16" width="14" height="11" rx="1" />
                <rect x="19" y="16" width="14" height="11" rx="1" />
              </svg>
            </button>
          </div>
        </div>

        <section className="mb-[25px] ml-[25px] mr-6 min-h-0 flex-1 bg-linear-to-b from-black to-[#242424]">
          <ModelCanvas />
        </section>
      </main>

      <footer className="flex h-[46px] shrink-0 border-l-2 border-r-4 border-black bg-[#404040]">
        <div className="flex w-160 shrink-0 items-center justify-between whitespace-pre border-r-4 border-t-4 border-[#222222] bg-[#555555] pl-2.5 pr-2.5 pt-1">
          <span>Mouse Cursor Position, X:</span>
          <span>80.47 , Y:</span>
          <span>40.84 , Z :</span>
          <span className="pl-3.5">0.00</span>
        </div>
        <div className="flex flex-1 items-center justify-between border-t-4 border-[#222222] pl-1 pr-9 pt-0.5">
          <span>Hold Shift to pan, Space to orbit</span>
          <span>BHC OUTDOOR :: Autosaved : 2504091254</span>
        </div>
      </footer>
    </div>
  );
}
